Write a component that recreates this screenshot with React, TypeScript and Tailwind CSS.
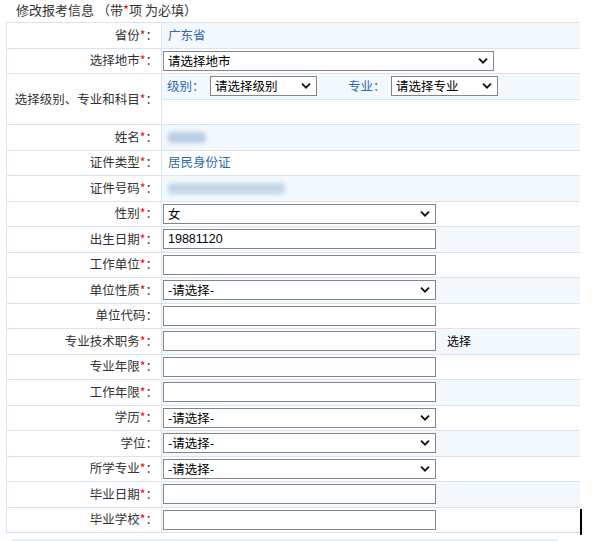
import React from 'react';

const font = { fontFamily: '"Noto Sans CJK SC", "Liberation Sans", sans-serif' };

function Star() {
  return <span className="text-[#ff0000]">*</span>;
}

function Chevron() {
  return (
    <svg className="absolute right-[5px] top-1/2 -translate-y-1/2" width="10" height="7" viewBox="0 0 10 7">
      <path d="M1 1.2 L5 5.2 L9 1.2" fill="none" stroke="#111" strokeWidth="1.8" />
    </svg>
  );
}

function Select({ text, w }: { text: string; w: string }) {
  return (
    <div className={`relative h-[20px] ${w} border border-[#858585] bg-white pl-[4px] text-[12.5px] leading-[18px] text-black`}>
      {text}
      <Chevron />
    </div>
  );
}

function Input({ text = '' }: { text?: string }) {
  return (
    <div
      className="h-[20px] w-[273px] border border-[#858585] bg-white pl-[4px] text-[12.5px] leading-[18px] text-black"
      style={{ fontFamily: '"Liberation Sans", "Noto Sans CJK SC", sans-serif' }}
    >
      {text}
    </div>
  );
}

type Row = { label: string; req: boolean; body: React.ReactNode; extra?: React.ReactNode };

const rows: Row[] = [
  { label: '姓名', req: true, body: <div className="ml-[5px] h-[11px] w-[38px] rounded-sm bg-[#b9cde3] blur-[2px]" /> },
  { label: '证件类型', req: true, body: <span className="ml-[5px] text-[#2e6aa8]">居民身份证</span> },
  { label: '证件号码', req: true, body: <div className="ml-[5px] h-[11px] w-[117px] rounded-sm bg-[#c4d5e8] blur-[2px]" /> },
  { label: '性别', req: true, body: <Select text="女" w="w-[273px]" /> },
  { label: '出生日期', req: true, body: <Input text="19881120" /> },
  { label: '工作单位', req: true, body: <Input /> },
  { label: '单位性质', req: true, body: <Select text="-请选择-" w="w-[273px]" /> },
  { label: '单位代码', req: false, body: <Input /> },
  { label: '专业技术职务', req: true, body: <Input />, extra: <span className="ml-[11px] text-[12px] text-black">选择</span> },
  { label: '专业年限', req: true, body: <Input /> },
  { label: '工作年限', req: true, body: <Input /> },
  { label: '学历', req: true, body: <Select text="-请选择-" w="w-[273px]" /> },
  { label: '学位', req: false, body: <Select text="-请选择-" w="w-[273px]" /> },
  { label: '所学专业', req: true, body: <Select text="-请选择-" w="w-[273px]" /> },
  { label: '毕业日期', req: true, body: <Input /> },
  { label: '毕业学校', req: true, body: <Input /> },
];

function Label({ label, req }: { label: string; req: boolean }) {
  return (
    <div className="flex w-[155px] shrink-0 items-center justify-end border-r border-[#d6e4f1] bg-white pr-[3px] text-[12.5px] text-[#333]">
      {label}
      {req && <Star />}
      <span>：</span>
    </div>
  );
}

export default function App() {
  return (
    <div className="relative h-[541px] w-[595px] bg-white" style={font}>
      <div className="h-[22px] pl-[16px] pt-[1px] text-[13px] leading-[18px] text-[#333]">
        修改报考信息 （带<Star />项 为必填）
      </div>

      <div className="ml-[6px] w-[574px] border-l border-t border-[#d6e4f1]">
        {/* 省份 */}
        <div className="flex h-[25.5px] border-b border-[#d6e4f1]">
          <Label label="省份" req />
          <div className="flex flex-1 items-center bg-[#f3f8fd] pl-[1px] text-[12.5px]">
            <span className="ml-[5px] text-[#2e6aa8]">广东省</span>
          </div>
        </div>
        {/* 选择地市 */}
        <div className="flex h-[25.5px] border-b border-[#d6e4f1]">
          <Label label="选择地市" req />
          <div className="flex flex-1 items-center bg-white pl-[1px]">
            <Select text="请选择地市" w="w-[331px]" />
          </div>
        </div>
        {/* 级别专业 */}
        <div className="flex h-[51px] border-b border-[#d6e4f1]">
          <Label label="选择级别、专业和科目" req />
          <div className="flex flex-1 flex-col">
            <div className="flex h-[25.5px] items-center border-b border-[#d6e4f1] bg-[#f3f8fd] pl-[5px] text-[12.5px]">
              <span className="w-[43px] text-[#2e6aa8]">级别：</span>
              <Select text="请选择级别" w="w-[107px]" />
              <span className="ml-[31px] w-[43px] text-[#2e6aa8]">专业：</span>
              <Select text="请选择专业" w="w-[107px]" />
            </div>
            <div className="flex-1 bg-white" />
          </div>
        </div>
        {rows.map((r, i) => (
          <div key={r.label} className="flex h-[25.5px] border-b border-[#d6e4f1]">
            <Label label={r.label} req={r.req} />
            <div className={`flex flex-1 items-center pl-[1px] text-[12.5px] ${i % 2 === 0 ? 'bg-[#f3f8fd]' : 'bg-white'}`}>
              {r.body}
              {r.extra}
            </div>
          </div>
        ))}
      </div>

      <div className="ml-[12px] mt-[6px] h-[2px] w-[546px] bg-[#e3eef8]" />

      {/* text cursor */}
      <div className="absolute left-[580px] top-[509px] h-[26px] w-[2px] bg-black" />
    </div>
  );
}
